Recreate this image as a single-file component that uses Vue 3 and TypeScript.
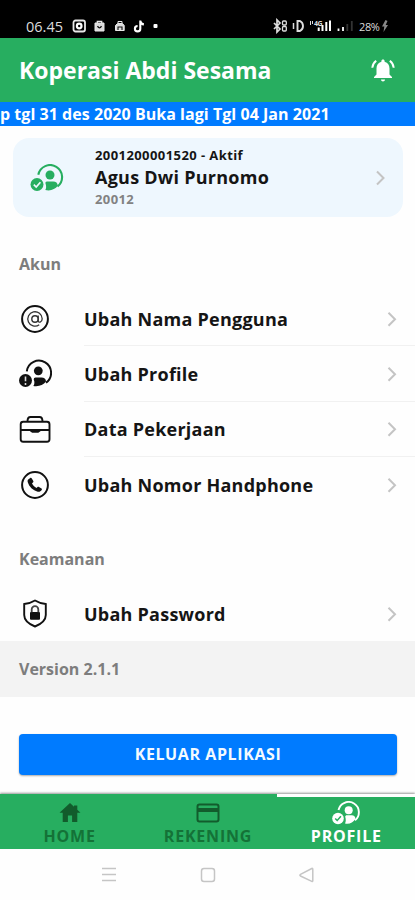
<script setup lang="ts">
interface MenuItem {
  label: string
  icon: 'at' | 'user' | 'case' | 'phone'
}

const accountItems: MenuItem[] = [
  { label: 'Ubah Nama Pengguna', icon: 'at' },
  { label: 'Ubah Profile', icon: 'user' },
  { label: 'Data Pekerjaan', icon: 'case' },
  { label: 'Ubah Nomor Handphone', icon: 'phone' },
]
</script>

<template>
  <div class="screen">
    <div class="status">
      <span class="clock">06.45</span>
      <svg class="status-left" width="90" height="16" viewBox="0 0 90 16" fill="none" stroke="#e8e8e8">
        <rect x="2.500" y="2.500" width="11.500" height="11" rx="2" stroke-width="1.800" />
        <circle cx="8.200" cy="8" r="3.400" fill="#fff" stroke="none" />
        <circle cx="8.200" cy="8" r="1.200" fill="#000" stroke="none" />
        <path d="M24 5h9v8h-9z" fill="#dcdcdc" stroke-width="1" />
        <path d="M26.300 5.500V3.300h4.400v2.200" stroke-width="1.300" />
        <path d="M26.500 8.200q2 3.400 4 0" stroke="#111" stroke-width="1.300" />
        <path d="M44.500 12.500v-5l2-2h5l1.700 2v5z" fill="#dcdcdc" stroke-width="1" />
        <path d="M47 5V3.500h4V5" stroke-width="1" />
        <path d="M47 12V9h4v3" stroke="#111" stroke-width="1.100" />
        <path d="M69.300 2.500v8.200a2.700 2.700 0 1 1-2.700-2.700M69.300 3c.3 2 1.500 3.200 3.600 3.400" stroke="#fff" stroke-width="2.100" />
        <rect x="82.500" y="6" width="4" height="4" rx="1" fill="#fff" stroke="none" />
      </svg>
      <svg class="status-right" width="82" height="16" viewBox="0 0 82 16" fill="none" stroke="#ddd">
        <path d="m1 5 6 6-3 3V2l3 3-6 6" stroke-width="1.700" />
        <rect x="9.500" y="3" width="3.800" height="4" rx="1" stroke-width="1.300" />
        <rect x="9.500" y="8.500" width="3.800" height="4.500" rx="1" stroke-width="1.300" />
        <path d="M20.500 5v6" stroke-width="1.500" />
        <path d="M24.500 3h2.500q3 1.500 3 5t-3 5h-2.500z" stroke-width="1.900" />
        <path d="M45.700 13V9.500M49.500 13V7M53.300 13V4M57 13V2.500" stroke="#fff" stroke-width="2" />
        <path d="M65.500 13v-2.500M70 13V9" stroke="#fff" stroke-width="1.800" />
        <path d="M74.300 13V6M78.800 13V3" stroke="#333" stroke-width="1.800" />
        <path d="M37.500 3v4M39.500 3v3" stroke-width="1" />
        <text x="41" y="8" class="network">4G</text>
      </svg>
      <span class="battery">28%</span>
      <svg class="bolt" width="8" height="12" viewBox="0 0 8 12"><path d="M4.500 0 1 6.500h2.300L2.500 12 7 5H4.700L6.500 1z" fill="#888" /></svg>
    </div>

    <header class="header">
      <h1>Koperasi Abdi Sesama</h1>
      <svg width="24" height="24" viewBox="0 0 24 24">
        <path d="M10 21.500h4c0 1.100-.9 2-2 2s-2-.9-2-2ZM12 1.500c-1 0-1.600.7-1.600 1.500v.7C7 4.500 5.500 7.200 5.500 10.500v6L3 19v1h18v-1l-2.500-2.500v-6c0-3.300-1.500-6-4.900-6.800V3c0-.8-.6-1.500-1.600-1.500Z" fill="#fff" />
        <path d="M1.300 9.800q.3-4.300 3.900-7M22.700 9.800q-.3-4.300-3.900-7" fill="none" stroke="#fff" stroke-width="2" />
      </svg>
    </header>

    <div class="notice">p tgl 31 des 2020 Buka lagi Tgl 04 Jan 2021</div>

    <section class="card">
      <svg class="card-icon" width="34" height="28" viewBox="0 0 34 28">
        <path d="M8.300 10.800A12 12 0 1 1 27.500 22.500" fill="none" stroke="#27ae60" stroke-width="2.100" />
        <circle cx="20" cy="11" r="4.500" fill="#27ae60" />
        <path d="M15.300 26c1-1.300 1.200-4 .1-7q-.1-1.500 1.400-1.500h6.500c2.500 0 4.500 1.500 4.500 4.300-2.800 3.500-7 5.500-12.500 4.200Z" fill="#27ae60" />
        <circle cx="7" cy="20.500" r="6.500" fill="#27ae60" />
        <path d="m3.800 20.700 2.400 2.300 4.200-4.800" fill="none" stroke="#eef7fe" stroke-width="1.700" />
      </svg>
      <div class="member">
        <span class="member-id">2001200001520 - Aktif</span>
        <span class="member-name">Agus Dwi Purnomo</span>
        <span class="member-code">20012</span>
      </div>
      <svg class="chevron" width="10" height="16" viewBox="0 0 10 16"><path d="m1 1.500 6.500 6.500-6.500 6.500" /></svg>
    </section>

    <h2 class="account-title">Akun</h2>
    <ul class="menu">
      <li v-for="item in accountItems" :key="item.icon">
        <svg class="icon" width="34" height="30" viewBox="0 0 34 30">
          <template v-if="item.icon === 'at'">
            <circle cx="17" cy="15" r="12.900" fill="none" stroke="#111" stroke-width="2" />
            <circle cx="17" cy="15" r="3.200" fill="none" stroke="#333" stroke-width="1.400" />
            <path d="M20.200 11.500v5.200c0 2.500 4 1.800 4-1.900a7.200 7.200 0 1 0-3 6" fill="none" stroke="#333" stroke-width="1.300" />
          </template>
          <template v-else-if="item.icon === 'user'">
            <path d="M8.800 12.300A12.200 12.200 0 1 1 28 23.800" fill="none" stroke="#111" stroke-width="2" />
            <circle cx="20.300" cy="11.800" r="4.400" fill="#111" />
            <path d="M15.300 27c1.300-1.300 1.500-4.400.4-6.500q0-2 1.800-2h6c2.600 0 4.500 1.500 4.500 4.100-2.800 3.500-7.500 5.500-12.700 4.400Z" fill="#111" />
            <circle cx="7.500" cy="21.500" r="6.500" fill="#111" />
            <path d="M7.500 17.500v4.800M7.500 24v2" stroke="#ddd" stroke-width="1.600" />
          </template>
          <template v-else-if="item.icon === 'case'">
            <g fill="none" stroke="#111" stroke-width="1.900">
              <rect x="2.700" y="7.700" width="28.800" height="20" rx="2.500" />
              <path d="M9.500 7.500c0-3 1-4.500 3-4.500h9c2 0 3 1.500 3 4.500M3 16h28" />
            </g>
            <path d="M12 16h10.500v1.200l-2.200 1.600h-6.100l-2.200-1.600z" fill="#111" />
          </template>
          <template v-else>
            <circle cx="17" cy="15" r="12.900" fill="none" stroke="#111" stroke-width="2" />
            <path d="m10.200 9.400 2-1.400c.6-.4 1.200-.2 1.600.4l1.500 2.500c.3.600.2 1.100-.3 1.500l-1 .9c.9 2.100 2.400 3.700 4.500 4.700l1-.9c.5-.4 1-.5 1.500-.2l2.500 1.600c.5.400.6 1 .2 1.500-1 1.400-2.300 2.200-4 1.700-4.700-1.200-8.600-5-9.900-9.400-.3-1.200-.3-2.200.4-2.900Z" fill="#111" />
          </template>
        </svg>
        <div class="row">
          <span>{{ item.label }}</span>
          <svg class="chevron" width="10" height="16" viewBox="0 0 10 16"><path d="m1.500 1.700 6.500 6.500-6.500 6.500" /></svg>
        </div>
      </li>
    </ul>

    <h2 class="security-title">Keamanan</h2>
    <ul class="menu">
      <li>
        <svg class="icon" width="34" height="30" viewBox="0 0 34 30">
          <path d="M17 2.500c3.500 2.200 7 3.100 10.800 3.500v11c0 5.300-4.300 8.900-10.800 11.500-6.500-2.600-10.800-6.200-10.800-11.500V6c3.800-.4 7.300-1.300 10.800-3.500Z" fill="none" stroke="#111" stroke-width="1.900" />
          <rect x="12" y="14" width="10" height="7.700" rx="1" fill="#111" />
          <path d="M13.700 14.200v-2.700a3.300 3.300 0 0 1 6.600 0v2.700" fill="none" stroke="#444" stroke-width="1.800" />
        </svg>
        <div class="row">
          <span>Ubah Password</span>
          <svg class="chevron" width="10" height="16" viewBox="0 0 10 16"><path d="m1.500 1.700 6.500 6.500-6.500 6.500" /></svg>
        </div>
      </li>
    </ul>

    <div class="version">Version 2.1.1</div>

    <div class="action"><button type="button">KELUAR APLIKASI</button></div>

    <nav class="tabs">
      <a class="tab">
        <svg width="28" height="24" viewBox="0 0 28 24"><path d="M14 2 3.500 11.700h3.200V21h5.200v-6.500h4.200V21h5.200v-9.300h3.200l-3.200-3V4.500H18v1.300z" fill="#125c2c" /></svg>
        <span>HOME</span>
      </a>
      <a class="tab">
        <svg width="28" height="24" viewBox="0 0 28 24">
          <rect x="3.500" y="3.500" width="21" height="17" rx="2" fill="none" stroke="#125c2c" stroke-width="2" />
          <path d="M3.500 9h21" stroke="#125c2c" stroke-width="4" />
        </svg>
        <span>REKENING</span>
      </a>
      <a class="tab active">
        <svg width="28" height="24" viewBox="0 0 28 24">
          <path d="M6.500 9A10.300 10.300 0 1 1 23 19.300" fill="none" stroke="#fff" stroke-width="1.900" />
          <circle cx="16.700" cy="9.300" r="4" fill="#fff" />
          <path d="M13 22.500c1-1.500 1-4.300.2-6.700 0-.9.700-1.600 1.600-1.600h5c2.200 0 3.600 1.300 3.600 3.700-2.500 3.800-6.100 5.700-10.400 4.600Z" fill="#fff" />
          <circle cx="6" cy="17.500" r="5.800" fill="#fff" />
          <path d="m3.200 17.500 2 2 3.700-4.200" fill="none" stroke="#27ae60" stroke-width="1.500" />
        </svg>
        <span>PROFILE</span>
      </a>
    </nav>

    <div class="system">
      <svg width="16" height="16" viewBox="0 0 16 16"><path d="M1 1.500h14M1 7.500h14M1 13.500h14" /></svg>
      <svg width="16" height="16" viewBox="0 0 16 16"><rect x="1.500" y="1.500" width="13" height="13" rx="2.500" /></svg>
      <svg width="16" height="16" viewBox="0 0 16 16"><path d="M13.800 2.500v11.300q0 1-1 .6L1.500 9q-1.200-.8 0-1.600l11.300-5.900q1-.5 1 1Z" /></svg>
    </div>
  </div>
</template>

<style>
body {
  background: #fefefe;
}
</style>

<style scoped>
.screen {
  width: 415px;
  height: 900px;
  overflow: hidden;
  display: flex;
  flex-direction: column;
  background: #fefefe;
  color: #151515;
  font-family: "Open Sans", "Noto Sans", sans-serif;
  font-weight: 700;
  white-space: nowrap;
}
.screen > * {
  flex: none;
}
svg {
  display: block;
  flex: none;
}
h1, h2, ul {
  margin: 0;
  padding: 0;
}
.status {
  height: 38px;
  box-sizing: border-box;
  padding: 14px 25px 0 26px;
  display: flex;
  align-items: center;
  background: #000;
  color: #ddd;
}
.clock {
  width: 45px;
  font-size: 14.500px;
  font-weight: 400;
}
.status-right {
  margin-left: 112px;
}
.network {
  fill: #ddd;
  stroke: none;
  font-size: 7px;
  letter-spacing: -0.5px;
}
.battery {
  width: 21px;
  margin-left: 4px;
  font-size: 11px;
  font-weight: 400;
  letter-spacing: -0.4px;
}
.bolt {
  margin-left: 1px;
}
.header {
  height: 64px;
  box-sizing: border-box;
  padding: 0 20px 0 19px;
  display: flex;
  align-items: center;
  justify-content: space-between;
  background: #27ae60;
  color: #fff;
}
h1 {
  font-size: 23px;
  line-height: 32px;
  font-weight: 700;
}
.notice {
  height: 24px;
  line-height: 24px;
  background: #007bff;
  color: #fff;
  font-size: 16px;
  letter-spacing: 0.040px;
}
.card {
  height: 79px;
  box-sizing: border-box;
  margin: 12px 12px 0 13px;
  padding: 0 17px 0 17px;
  display: flex;
  align-items: center;
  border-radius: 16px;
  background: #eef7fe;
}
.member {
  flex: 1;
  margin-left: 31px;
  display: flex;
  flex-direction: column;
}
.member-id {
  font-size: 13px;
  line-height: 18px;
  letter-spacing: 0.420px;
}
.member-name {
  font-size: 18px;
  line-height: 26px;
  letter-spacing: 0.250px;
}
.member-code {
  font-size: 13px;
  line-height: 19px;
  letter-spacing: 0.400px;
  color: #828282;
}
.chevron path {
  fill: none;
  stroke: #c4c4c4;
  stroke-width: 2;
}
h2 {
  padding-left: 19px;
  font-size: 16px;
  line-height: 22px;
  font-weight: 700;
  color: #7d7d7d;
}
.account-title {
  margin-top: 36px;
}
.security-title {
  margin-top: 35px;
}
.menu {
  margin-top: 16px;
  list-style: none;
}
.menu li {
  height: 55.400px;
  padding-left: 18px;
  display: flex;
  align-items: center;
}
.row {
  flex: 1;
  height: 100%;
  box-sizing: border-box;
  margin-left: 32px;
  padding-top: 1px;
  padding-right: 18px;
  display: flex;
  align-items: center;
  justify-content: space-between;
  font-size: 18px;
  letter-spacing: 0.240px;
  border-bottom: 1px solid #f1f1f1;
}
li:last-child .row {
  border-bottom: 0;
}
.version {
  height: 56px;
  line-height: 56px;
  padding-left: 19px;
  background: #f3f3f3;
  color: #7d7d7d;
  font-size: 16px;
}
.action {
  padding: 37px 18px 19px 19px;
}
button {
  display: block;
  width: 100%;
  height: 41px;
  padding: 0;
  border: 0;
  border-radius: 4px;
  background: #007bff;
  box-shadow: 0 1px 2px #0005;
  color: #f4faff;
  font: 700 16px "Open Sans", sans-serif;
  letter-spacing: 0.600px;
}
.tabs {
  height: 55px;
  display: grid;
  grid-template-columns: repeat(3, 1fr);
  background: #27ae60;
  box-shadow: 0 -1px 2px #0006;
}
.tab {
  box-sizing: border-box;
  padding-top: 7px;
  padding-left: 1px;
  display: flex;
  flex-direction: column;
  align-items: center;
  color: #147237;
  font-size: 16px;
  line-height: 22px;
  letter-spacing: 0.800px;
}
.tab.active {
  padding-top: 4px;
  border-top: 3px solid #fff;
  color: #fff;
}
.system {
  flex: 1;
  padding-top: 18px;
  display: flex;
  justify-content: center;
  gap: 83px;
  background: #fefefe;
}
.system svg {
  fill: none;
  stroke: #c5c5c5;
  stroke-width: 1.500;
}
</style>
